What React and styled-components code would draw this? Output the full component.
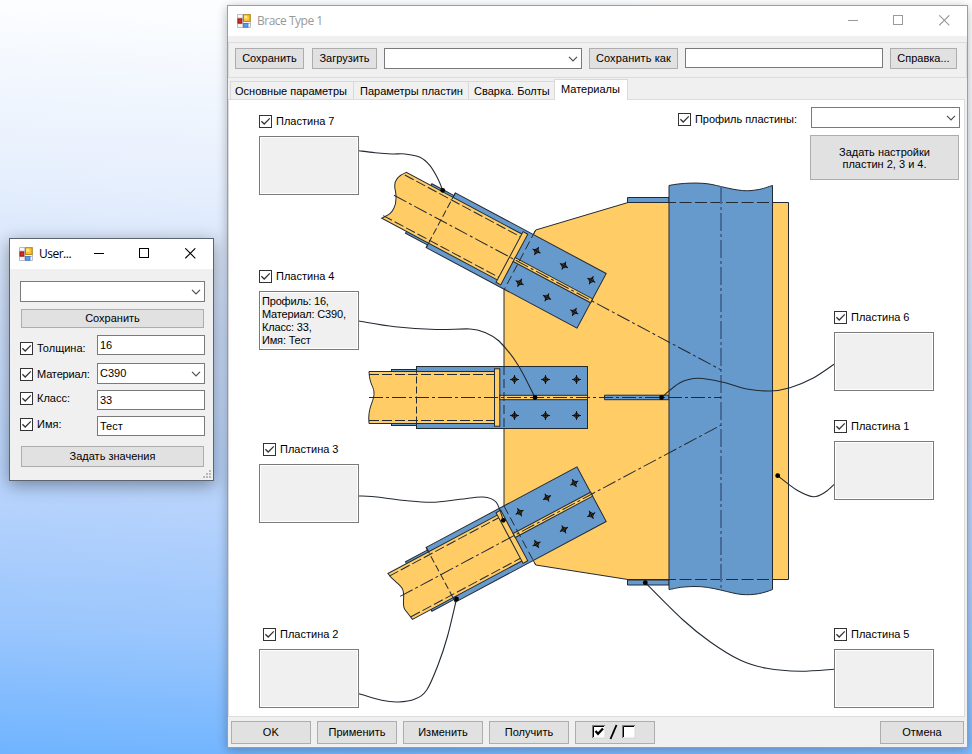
import React from 'react';
import styled, { createGlobalStyle } from 'styled-components';

const GlobalStyle = createGlobalStyle`
  * { box-sizing: border-box; }
  html, body { margin: 0; padding: 0; }
  body { font: 11px/13px "Liberation Sans", Arial, sans-serif; color: #000; overflow: hidden; }
`;

const Desktop = styled.main`
  position: relative;
  width: 972px;
  height: 754px;
  overflow: hidden;
  background: linear-gradient(183deg, #ffffff 0%, #fbfdff 7%, #e6effd 28%, #cbddfa 47%, #b5d2fc 69%, #9ac6fd 84%, #6fb4ff 100%);
`;

const Window = styled.section`
  position: absolute;
  left: ${p => p.$x}px;
  top: ${p => p.$y}px;
  width: ${p => p.$w}px;
  height: ${p => p.$h}px;
  display: flex;
  flex-direction: column;
  background: #f0f0f0;
  border: 1px solid ${p => (p.$active ? '#5b6470' : '#9a9da1')};
  box-shadow: ${p => (p.$active ? '0 4px 16px rgba(0,0,0,.38)' : '0 2px 10px rgba(0,0,0,.28)')};
`;

const TitleBar = styled.header`
  display: flex;
  align-items: center;
  height: 30px;
  flex: none;
  padding-left: 9px;
  background: #fff;
  color: ${p => (p.$active ? '#000' : '#999')};
`;

const Title = styled.h1`
  flex: 1;
  margin: 0 0 0 5px;
  font: 400 12px/16px "Open Sans", "Noto Sans", sans-serif;
  letter-spacing: ${p => p.$spacing || 0}px;
  white-space: nowrap;
`;

const Caption = styled.button`
  display: flex;
  justify-content: center;
  align-items: center;
  width: ${p => p.$w || 45}px;
  height: 30px;
  padding: 0 0 2px;
  border: 0;
  background: transparent;
  color: inherit;
`;

const Button = styled.button`
  display: flex;
  align-items: center;
  justify-content: center;
  flex: none;
  width: ${p => p.$w}px;
  height: ${p => p.$h || 21}px;
  padding: 0;
  border: 1px solid #adadad;
  background: #e1e1e1;
  color: #000;
  font: inherit;
  line-height: ${p => p.$line || 13}px;
  letter-spacing: ${p => p.$spacing || 0}px;
  white-space: pre;
`;

const Field = styled.div`
  display: flex;
  align-items: center;
  justify-content: space-between;
  flex: none;
  width: ${p => p.$w}px;
  height: ${p => p.$h || 20}px;
  padding: 0 3px 0 2px;
  border: 1px solid #7a7a7a;
  background: #fff;
`;

const ToolGroup = styled.div`
  display: flex;
  align-items: flex-start;
  height: 36px;
  margin-top: 6px;
  padding: 5px 0 0 6px;
  border: 1px solid #dcdcdc;
  gap: 7px;
`;

const FileActions = styled.div`
  display: flex;
  gap: 8px;
`;

const Tabs = styled.nav`
  display: flex;
  align-items: flex-end;
  height: 21px;
  margin: 1px 0 0 2px;
  position: relative;
`;

const Tab = styled.div`
  width: ${p => p.$w}px;
  height: ${p => (p.$selected ? 21 : 18)}px;
  padding: 3px 0 0 ${p => p.$pad}px;
  border: 1px solid #d9d9d9;
  border-bottom: 0;
  ${p => !p.$selected && 'border-right: 0; margin-bottom: 1px;'}
  background: ${p => (p.$selected ? '#fff' : '#f0f0f0')};
  white-space: nowrap;
  z-index: 1;
`;

const Page = styled.div`
  position: relative;
  display: flex;
  justify-content: space-between;
  width: 737px;
  height: 618px;
  margin-top: -1px;
  border: 1px solid #dcdcdc;
  background: #fff;
`;

const Drawing = styled.svg`
  position: absolute;
  left: 0;
  top: 0;
`;

const Side = styled.div`
  position: relative;
  display: flex;
  flex-direction: column;
  padding: ${p => p.$top}px ${p => p.$right || 0}px 0 ${p => p.$left || 0}px;
`;

const ProfileRow = styled.div`
  display: grid;
  grid-template-columns: 133px 149px;
  height: 21px;
  margin-bottom: 7px;
`;

const ProfileLabel = styled.div`
  padding-top: 6px;
`;

const ProfileButton = styled.div`
  padding-left: 132px;
  height: 45px;
`;

const Callout = styled.div`
  display: flex;
  flex-direction: column;
  gap: 8px;
  margin-top: ${p => p.$gap}px;
  margin-left: ${p => p.$left || 0}px;
`;

const CheckRow = styled.label`
  display: flex;
  align-items: flex-start;
  height: 13px;
  padding-left: ${p => p.$indent || 0}px;
  gap: 4px;
  white-space: nowrap;
`;

const CheckText = styled.span`
  letter-spacing: ${p => p.$spacing || 0}px;
`;

const Info = styled.div`
  width: 100px;
  height: 59px;
  padding: 3px 2px;
  border: 1px solid #7a7a7a;
  box-shadow: inset 0 0 0 1px #fff;
  background: #f0f0f0;
  letter-spacing: -0.18px;
  white-space: pre;
`;

const Footer = styled.footer`
  display: flex;
  gap: 6px;
  padding: 4px 3px 0 3px;
  ${Button}:last-child { margin-left: auto; }
`;

const Form = styled.div`
  padding: 12px 0 0 10px;
`;

const FormButton = styled.div`
  padding: ${p => p.$top}px 0 0 1px;
`;

const FormRow = styled.div`
  display: grid;
  grid-template-columns: 77px 108px;
  align-items: start;
  margin-top: ${p => p.$gap}px;
`;

const FormLabel = styled.div`
  padding-top: ${p => p.$top}px;
`;

const Grip = styled.svg`
  position: absolute;
  right: 2px;
  bottom: 2px;
`;

const Check = () => (
  <svg width="13" height="13" viewBox="0 0 13 13">
    <rect x=".5" y=".5" width="12" height="12" fill="#fff" stroke="#333" />
    <path d="M2.4 6.2 5.2 9 10.8 3.4" fill="none" stroke="#333" strokeWidth="1.25" />
  </svg>
);

const Chevron = () => (
  <svg width="10" height="6" viewBox="0 0 10 6">
    <path d="M1 .8 5 4.8 9 .8" fill="none" stroke="#505050" strokeWidth="1.2" />
  </svg>
);

const AppIcon = () => (
  <svg width="15" height="14" viewBox="0 0 15 14">
    <path d="M.5.5h13v13H.5z" fill="#f6f6f6" stroke="#b9bcc0" />
    <path d="M5.8 0v14M0 9.5h14M0 4.2h6" stroke="#b9bcc0" />
    <rect x="1" y="4.9" width="3.8" height="4.2" fill="#d22f20" stroke="#9b1710" />
    <rect x="6.5" y=".8" width="6.6" height="6.6" fill="#fbc62f" stroke="#b98308" />
    <rect x="7.3" y="1.6" width="3" height="3" fill="#ffe690" />
    <rect x="6.4" y="9.4" width="4.6" height="3.8" fill="#5b9bf2" stroke="#3c72cf" strokeWidth=".8" />
  </svg>
);

const CaptionButtons = ({ widths }) => (
  <>
    <Caption $w={widths[0]} aria-label="Minimize">
      <svg width="11" height="11"><path d="M0 5.5h10" stroke="currentColor" /></svg>
    </Caption>
    <Caption $w={widths[1]} aria-label="Maximize">
      <svg width="11" height="11"><rect x=".5" y=".5" width="9" height="9" fill="none" stroke="currentColor" /></svg>
    </Caption>
    <Caption $w={widths[2]} aria-label="Close">
      <svg width="11" height="11"><path d="M.3.3 10.3 10.3M10.3.3.3 10.3" stroke="currentColor" strokeWidth="1.1" /></svg>
    </Caption>
  </>
);

const Plate = ({ label, gap, left, indent, children }) => (
  <Callout $gap={gap} $left={left}>
    <CheckRow $indent={indent}><Check /><CheckText>{label}</CheckText></CheckRow>
    <Info>{children}</Info>
  </Callout>
);

const BLUE = '#6699cc';
const SAND = '#ffcc66';
const INK = '#222a33';

// Smooth curve through a list of points.
const curve = pts => {
  let d = `M${pts[0]}`;
  for (let i = 0; i < pts.length - 1; i += 1) {
    const a = pts[i - 1] || pts[i];
    const b = pts[i];
    const c = pts[i + 1];
    const e = pts[i + 2] || c;
    d += `C${b[0] + (c[0] - a[0]) / 6},${b[1] + (c[1] - a[1]) / 6} ${c[0] - (e[0] - b[0]) / 6},${c[1] - (e[1] - b[1]) / 6} ${c}`;
  }
  return d;
};

const Bolt = ({ x, y }) => (
  <g transform={`translate(${x} ${y})`}>
    <path d="M0-4.5 1.4-1.4 4.5 0 1.4 1.4 0 4.5-1.4 1.4-4.5 0-1.4-1.4Z" fill="#151515" stroke="none" />
    <circle r="2" fill="#6b5a35" stroke="#111" strokeWidth=".8" />
    <path d="M-4.5 0h9M0-4.5v9" stroke="#111" strokeWidth=".9" />
  </g>
);

// A brace end: gusset plates, beam with a broken far edge, end plate and bolts.
// The origin is the middle of the plate edge nearest to the column.
const Brace = ({ transform, length, edge, reach, bolts = [-73, -42, -11] }) => (
  <g transform={transform} fill="none" stroke={INK} strokeWidth="1">
    <rect x="-196" y="-28" width="30" height="56" fill={BLUE} />
    <rect x="-171" y="-31" width="171" height="62" fill={BLUE} />
    <path d={`M-93-26H${-length}${edge}L-93 26Z`} fill={SAND} stroke="none" />
    <path d={`M-93-26H${-length}${edge}L-93 26`} />
    <path d={`M${-length}-23H-93M${-length} 23H-93`} strokeDasharray="10 3" />
    <path d="M-171-31V31" strokeDasharray="7 3" />
    <rect x="-93" y="-28.7" width="5.3" height="57.4" fill={SAND} />
    <rect x="-87.7" y="-2.2" width="87.7" height="4.4" fill={SAND} />
    <path d={`M${-length} 0H${reach}`} strokeDasharray="14 3 3 3" />
    {bolts.map(x => [-18, 18].map(y => <Bolt key={`${x}${y}`} x={x} y={y} />))}
  </g>
);

const SLANTED_BOLTS = [-72, -41, -10];

const LEADERS = [
  [[359, 150.7], [375, 152.7], [392, 154], [405, 154], [420, 157.3], [430, 165.7], [438, 179], [442.7, 190.3]],
  [[359, 321], [395, 326.7], [436, 329.5], [470, 329], [485, 332.5], [499, 341], [518, 365], [535, 397.5]],
  [[359, 496], [372, 496.5], [405, 500.5], [432, 502.3], [460, 499.3], [483, 497], [496, 502], [503.3, 520.3]],
  [[359, 693.7], [381.7, 700.3], [398.3, 702], [415, 699], [426.7, 690], [438, 665], [447.3, 637], [456.5, 599]],
  [[834, 364.3], [813.3, 378], [790, 387.7], [770, 391], [746.7, 389], [723.3, 382.3], [698.3, 378.3], [680, 382.7], [661.5, 397.5]],
  [[834.3, 484.3], [825, 492.3], [813.3, 496.7], [796.7, 490], [777.7, 475.7]],
  [[834, 669.3], [800, 671.3], [766.7, 668.3], [740, 660], [710, 641.7], [682.5, 619.5], [645.3, 582.7]],
];

const Connection = () => (
  <Drawing width="735" height="616" viewBox="229 100 735 616" fill="none" stroke={INK}>
    <path d="M788.5 202.5H628L535.7 230 504 290V506L535.7 565 628 579.5H788.5Z" fill={SAND} />
    <path d="M669 197.5H627.5V202.5H669ZM669 580H627.5V585H669ZM604.5 395.2H669V399.7H604.5Z" fill={BLUE} />
    <path d="M669 185.5C680 183 700 182 712 184.5S740 192 752 190.5 764 188 772.5 185.5V589.5C764 593 754 595.5 742 594.5S712 586 694 586.5 677 588.5 669 589.5Z" fill={BLUE} />
    <path d="M669 202.5H772M669 579.5H772" strokeDasharray="12 3.5" strokeDashoffset="5" />
    <path d="M721 186V590" stroke="#466a95" strokeWidth="2" strokeDasharray="18 3 3 3" />
    <Brace transform="translate(591.6 300.8) rotate(28.1)" length={224} reach={146.6} bolts={SLANTED_BOLTS}
      edge="C-230-19-231-12-226-6S-218 5-218 12-220 20-224 26" />
    <Brace transform="translate(587.5 397.5)" length={218.5} reach={133.5}
      edge="C-218-12-213-11-213.5-3S-220 10-218.5 26" />
    <Brace transform="translate(591.6 494.2) rotate(-28.1)" length={217} reach={146.6} bolts={SLANTED_BOLTS}
      edge="C-216-16-211-12-211.5-5S-220 8-219 14-218 20-217 26" />
    <path d="M535.7 230 504 290M504 366V428M504 506 535.7 565" strokeDasharray="9 4" />
    {LEADERS.map(points => {
      const [x, y] = points[points.length - 1];
      return (
        <g key={`${x}-${y}`}>
          <path d={curve(points)} strokeWidth="1.1" />
          <circle cx={x} cy={y} r="2.4" fill="#000" stroke="none" />
        </g>
      );
    })}
  </Drawing>
);

const ToggleGlyph = () => (
  <svg width="46" height="17" viewBox="0 0 46 17">
    <rect x="1" y="2" width="12" height="12" fill="#fff" stroke="#d8d8d8" />
    <path d="M.5 14V1.5H13" fill="none" stroke="#777" />
    <path d="M1.5 13V2.5H12" fill="none" stroke="#000" />
    <path d="M3.5 7 6 9.8 11 4.5" fill="none" stroke="#000" strokeWidth="2.3" />
    <path d="M24.5 1 18.5 15" stroke="#000" strokeWidth="1.9" />
    <rect x="31" y="2" width="12" height="12" fill="#fff" stroke="#d8d8d8" />
    <path d="M30.5 14V1.5H43" fill="none" stroke="#777" />
    <path d="M31.5 13V2.5H42" fill="none" stroke="#000" />
  </svg>
);

const BraceWindow = () => (
  <Window $x={227} $y={5} $w={741} $h={743}>
    <TitleBar>
      <AppIcon />
      <Title $spacing={-0.5}>Brace Type 1</Title>
      <CaptionButtons widths={[46, 45, 46]} />
    </TitleBar>
    <ToolGroup>
      <FileActions>
        <Button $w={69}>Сохранить</Button>
        <Button $w={65}>Загрузить</Button>
      </FileActions>
      <Field $w={198} $h={21}><span /><Chevron /></Field>
      <Button $w={89} $spacing={0.1}>Сохранить как</Button>
      <Field $w={198} />
      <Button $w={67}>Справка...</Button>
    </ToolGroup>
    <Tabs>
      <Tab $w={123} $pad={4}>Основные параметры</Tab>
      <Tab $w={115} $pad={6}>Параметры пластин</Tab>
      <Tab $w={86} $pad={5}>Сварка. Болты</Tab>
      <Tab $w={74} $pad={6} $selected>Материалы</Tab>
    </Tabs>
    <Page>
      <Connection />
      <Side $left={30} $top={15}>
        <Plate label="Пластина 7" gap={0} />
        <Plate label="Пластина 4" gap={75}>{'Профиль: 16,\nМатериал: С390,\nКласс: 33,\nИмя: Тест'}</Plate>
        <Plate label="Пластина 3" gap={93} indent={4} />
        <Plate label="Пластина 2" gap={105} indent={4} />
      </Side>
      <Side $top={7} $right={4}>
        <ProfileRow>
          <ProfileLabel>
            <CheckRow><Check /><CheckText $spacing={-0.05}>Профиль пластины:</CheckText></CheckRow>
          </ProfileLabel>
          <Field $w={149} $h={21}><span /><Chevron /></Field>
        </ProfileRow>
        <ProfileButton>
          <Button $w={149} $h={45} $line={12}>{'Задать настройки\nпластин 2, 3 и 4.'}</Button>
        </ProfileButton>
        <Plate label="Пластина 6" gap={131} left={156} />
        <Plate label="Пластина 1" gap={29} left={156} />
        <Plate label="Пластина 5" gap={128} left={156} />
      </Side>
    </Page>
    <Footer>
      <Button $w={80} $h={23} $spacing={0.4}>OK</Button>
      <Button $w={80} $h={23}>Применить</Button>
      <Button $w={80} $h={23}>Изменить</Button>
      <Button $w={80} $h={23}>Получить</Button>
      <Button $w={80} $h={23} aria-label="Toggle all"><ToggleGlyph /></Button>
      <Button $w={84} $h={23}>Отмена</Button>
    </Footer>
  </Window>
);

const UserWindow = () => (
  <Window $x={9} $y={238} $w={205} $h={243} $active>
    <TitleBar $active>
      <AppIcon />
      <Title $spacing={-0.5}>User...</Title>
      <CaptionButtons widths={[45, 45, 46]} />
    </TitleBar>
    <Form>
      <Field $w={185} $h={21}><span /><Chevron /></Field>
      <FormButton $top={7}><Button $w={183} $h={19}>Сохранить</Button></FormButton>
      <FormRow $gap={7}>
        <FormLabel $top={7}><CheckRow><Check /><CheckText>Толщина:</CheckText></CheckRow></FormLabel>
        <Field $w={108}>16</Field>
      </FormRow>
      <FormRow $gap={8}>
        <FormLabel $top={5}><CheckRow><Check /><CheckText $spacing={-0.15}>Материал:</CheckText></CheckRow></FormLabel>
        <Field $w={108} $h={21}><span>С390</span><Chevron /></Field>
      </FormRow>
      <FormRow $gap={6}>
        <FormLabel $top={2}><CheckRow><Check /><CheckText>Класс:</CheckText></CheckRow></FormLabel>
        <Field $w={108}>33</Field>
      </FormRow>
      <FormRow $gap={6}>
        <FormLabel $top={2}><CheckRow><Check /><CheckText>Имя:</CheckText></CheckRow></FormLabel>
        <Field $w={108}>Тест</Field>
      </FormRow>
      <FormButton $top={10}><Button $w={183} $h={21}>Задать значения</Button></FormButton>
    </Form>
    <Grip width="8" height="8" fill="#b8b8b8">
      <path d="M6 0h2v2H6zM3 3h2v2H3zM6 3h2v2H6zM0 6h2v2H0zM3 6h2v2H3zM6 6h2v2H6z" />
    </Grip>
  </Window>
);

export default function App() {
  return (
    <>
      <GlobalStyle />
      <Desktop>
        <BraceWindow />
        <UserWindow />
      </Desktop>
    </>
  );
}
